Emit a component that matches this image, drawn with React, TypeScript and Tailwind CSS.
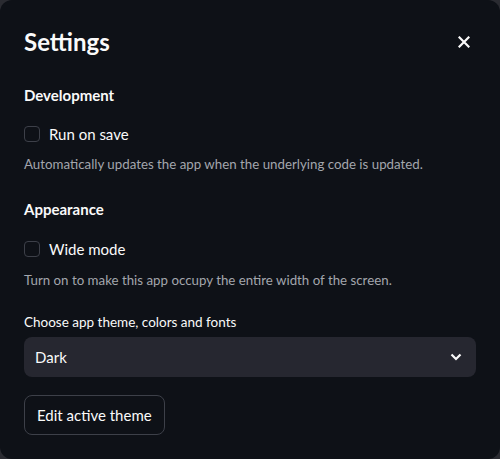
import React from "react";

function Checkbox() {
  return <span className="block w-4 h-4 rounded-[4px] border border-[#3d4049] bg-[#0e1117]" />;
}

export default function App() {
  return (
    <div className="w-[500px] h-[459px] bg-[#2a2b31] text-[#fafafa]" style={{ fontFamily: "Lato, 'Noto Sans', sans-serif" }}>
      <div className="w-full h-full bg-[#0e1117] rounded-[12px] px-6 pt-[27px]">
        <div className="flex items-center justify-between h-[30px]">
          <h1 className="text-[24px] font-bold leading-[30px]">Settings</h1>
          <svg width="12" height="12" viewBox="0 0 12 12" className="mr-[6px]">
            <path d="M1.5 1.5 L10.5 10.5 M10.5 1.5 L1.5 10.5" stroke="#fafafa" strokeWidth="2.2" strokeLinecap="square" />
          </svg>
        </div>
        <div className="mt-[28px] text-[15px] font-bold leading-[20px]">Development</div>
        <label className="mt-[19px] flex items-center gap-[9px] h-[20px]">
          <Checkbox />
          <span className="text-[15px] leading-[20px]">Run on save</span>
        </label>
        <div className="mt-[11px] text-[13.3px] leading-[18px] text-[#a3a6ad]">Automatically updates the app when the underlying code is updated.</div>
        <div className="mt-[26px] text-[15px] font-bold leading-[20px]">Appearance</div>
        <label className="mt-[20px] flex items-center gap-[9px] h-[20px]">
          <Checkbox />
          <span className="text-[15px] leading-[20px]">Wide mode</span>
        </label>
        <div className="mt-[12px] text-[13.3px] leading-[18px] text-[#a3a6ad]">Turn on to make this app occupy the entire width of the screen.</div>
        <div className="mt-[24px] text-[13.5px] leading-[18px]">Choose app theme, colors and fonts</div>
        <div className="mt-[6px] h-[40px] rounded-[8px] bg-[#262730] flex items-center justify-between pl-[11px] pr-[14px]">
          <span className="text-[15px]">Dark</span>
          <svg width="12" height="8" viewBox="0 0 12 8">
            <path d="M1.5 1.5 L6 6 L10.5 1.5" stroke="#fafafa" strokeWidth="2.2" fill="none" />
          </svg>
        </div>
        <button className="mt-[18px] h-[40px] px-[12px] rounded-[8px] border border-[#3d4049] text-[15px] bg-[#0e1117]">Edit active theme</button>
      </div>
    </div>
  );
}
